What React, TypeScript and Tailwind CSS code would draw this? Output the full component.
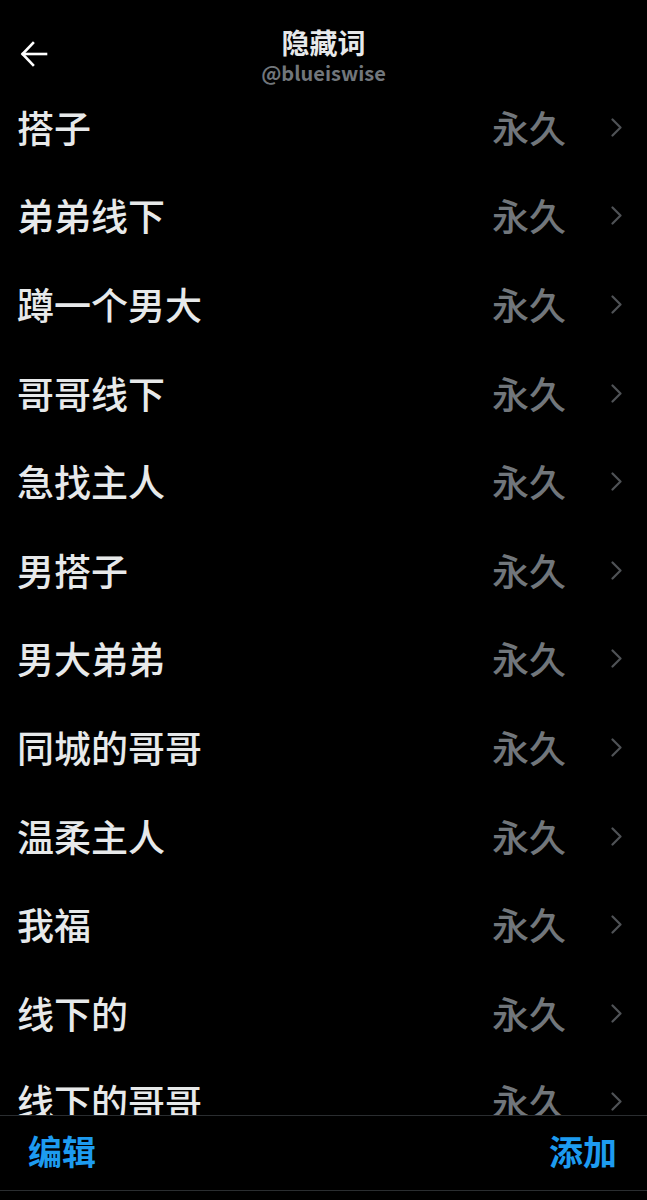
import React from "react";

const items = [
  "搭子",
  "弟弟线下",
  "蹲一个男大",
  "哥哥线下",
  "急找主人",
  "男搭子",
  "男大弟弟",
  "同城的哥哥",
  "温柔主人",
  "我福",
  "线下的",
  "线下的哥哥",
];

const font = { fontFamily: '"Noto Sans CJK SC", "Noto Sans", sans-serif' };

export default function App() {
  return (
    <div className="w-[647px] h-[1200px] bg-black flex flex-col overflow-hidden" style={font}>
      <header className="relative h-[83px] shrink-0 flex flex-col items-center">
        <button className="absolute left-[20px] top-[40px] w-[28px] h-[27px] flex items-center justify-center">
          <svg width="28" height="26" viewBox="0 0 28 26" fill="none" stroke="#ffffff" strokeWidth="2.6" strokeLinecap="square">
            <path d="M3 13 H26" />
            <path d="M13 2 L2.5 13 L13 24" strokeLinejoin="miter" />
          </svg>
        </button>
        <div className="mt-[27px] text-[28px] leading-[30px] font-bold text-[#e7e9ea]">隐藏词</div>
        <div className="text-[20px] leading-[22px] font-bold text-[#71767b] mt-[5px]">@blueiswise</div>
      </header>
      <main className="flex-1 overflow-hidden">
        {items.map((t) => (
          <div key={t} className="h-[88.6px] flex items-center pl-[17px] pr-[25px]">
            <span className="flex-1 text-[37px] leading-none font-medium text-[#e7e9ea]">{t}</span>
            <span className="text-[37px] leading-none font-medium text-[#71767b]">永久</span>
            <svg className="ml-[45px]" width="11" height="19" viewBox="0 0 11 19" fill="none" stroke="#4f5256" strokeWidth="2.2" strokeLinecap="round" strokeLinejoin="round">
              <path d="M1.5 1.5 L9.5 9.5 L1.5 17.5" />
            </svg>
          </div>
        ))}
      </main>
      <footer className="h-[75px] shrink-0 border-t border-[#2a2d30] flex items-center justify-between pl-[28px] pr-[30px] pb-[4px]">
        <span className="text-[34px] leading-none font-bold text-[#1d9bf0]">编辑</span>
        <span className="text-[34px] leading-none font-bold text-[#1d9bf0]">添加</span>
      </footer>
      <div className="h-[10px] shrink-0 border-t border-[#2a2d30] bg-black" />
    </div>
  );
}
